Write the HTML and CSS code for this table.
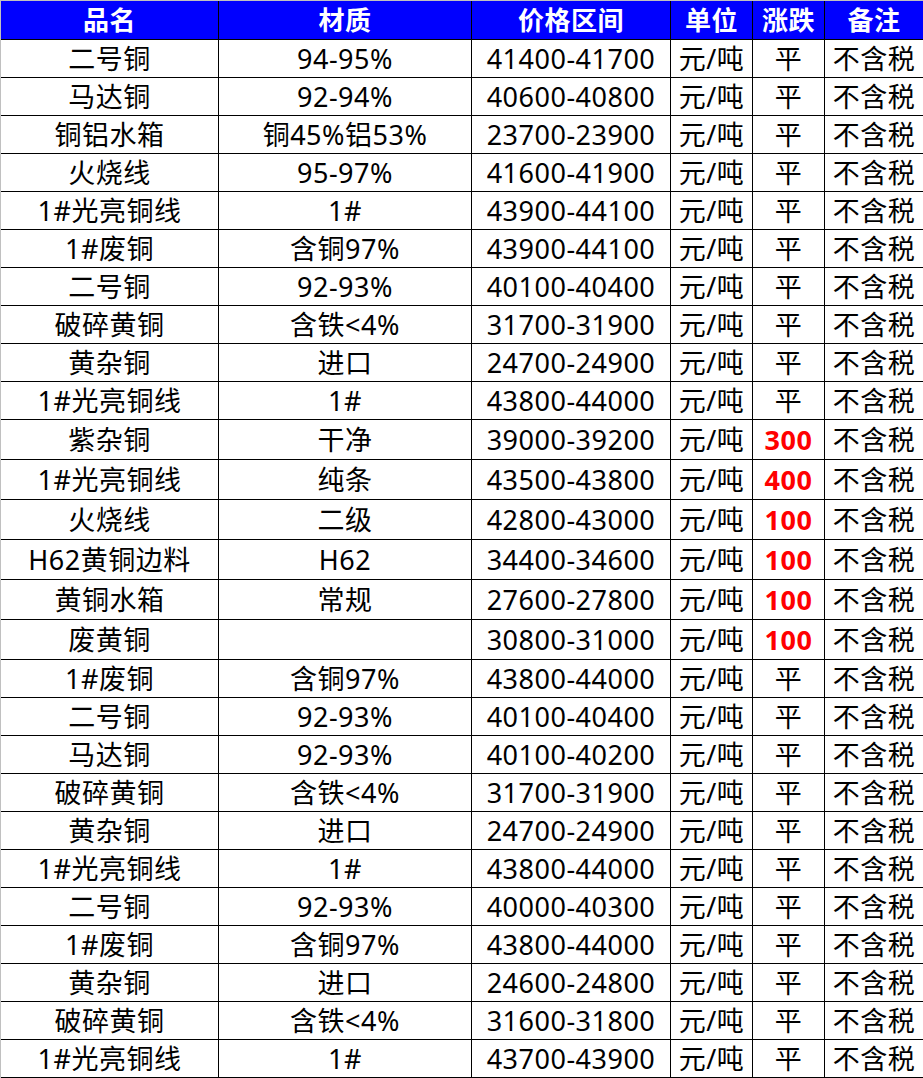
FILE: index.html
```html
<!DOCTYPE html>
<html lang="zh-CN">
<head>
<meta charset="utf-8">
<title>废铜价格表</title>
<link rel="stylesheet" href="styles.css">
</head>
<body>
<div class="sheet">
  <div class="row head"><div>品名</div><div>材质</div><div>价格区间</div><div>单位</div><div>涨跌</div><div>备注</div></div>
  <div class="row"><div>二号铜</div><div>94-95%</div><div>41400-41700</div><div>元/吨</div><div>平</div><div>不含税</div></div>
  <div class="row"><div>马达铜</div><div>92-94%</div><div>40600-40800</div><div>元/吨</div><div>平</div><div>不含税</div></div>
  <div class="row"><div>铜铝水箱</div><div>铜45%铝53%</div><div>23700-23900</div><div>元/吨</div><div>平</div><div>不含税</div></div>
  <div class="row"><div>火烧线</div><div>95-97%</div><div>41600-41900</div><div>元/吨</div><div>平</div><div>不含税</div></div>
  <div class="row"><div>1#光亮铜线</div><div>1#</div><div>43900-44100</div><div>元/吨</div><div>平</div><div>不含税</div></div>
  <div class="row"><div>1#废铜</div><div>含铜97%</div><div>43900-44100</div><div>元/吨</div><div>平</div><div>不含税</div></div>
  <div class="row"><div>二号铜</div><div>92-93%</div><div>40100-40400</div><div>元/吨</div><div>平</div><div>不含税</div></div>
  <div class="row"><div>破碎黄铜</div><div>含铁&lt;4%</div><div>31700-31900</div><div>元/吨</div><div>平</div><div>不含税</div></div>
  <div class="row"><div>黄杂铜</div><div>进口</div><div>24700-24900</div><div>元/吨</div><div>平</div><div>不含税</div></div>
  <div class="row"><div>1#光亮铜线</div><div>1#</div><div>43800-44000</div><div>元/吨</div><div>平</div><div>不含税</div></div>
  <div class="row tall"><div>紫杂铜</div><div>干净</div><div>39000-39200</div><div>元/吨</div><div class="up">300</div><div>不含税</div></div>
  <div class="row tall"><div>1#光亮铜线</div><div>纯条</div><div>43500-43800</div><div>元/吨</div><div class="up">400</div><div>不含税</div></div>
  <div class="row tall"><div>火烧线</div><div>二级</div><div>42800-43000</div><div>元/吨</div><div class="up">100</div><div>不含税</div></div>
  <div class="row tall"><div>H62黄铜边料</div><div>H62</div><div>34400-34600</div><div>元/吨</div><div class="up">100</div><div>不含税</div></div>
  <div class="row tall"><div>黄铜水箱</div><div>常规</div><div>27600-27800</div><div>元/吨</div><div class="up">100</div><div>不含税</div></div>
  <div class="row tall"><div>废黄铜</div><div></div><div>30800-31000</div><div>元/吨</div><div class="up">100</div><div>不含税</div></div>
  <div class="row"><div>1#废铜</div><div>含铜97%</div><div>43800-44000</div><div>元/吨</div><div>平</div><div>不含税</div></div>
  <div class="row"><div>二号铜</div><div>92-93%</div><div>40100-40400</div><div>元/吨</div><div>平</div><div>不含税</div></div>
  <div class="row"><div>马达铜</div><div>92-93%</div><div>40100-40200</div><div>元/吨</div><div>平</div><div>不含税</div></div>
  <div class="row"><div>破碎黄铜</div><div>含铁&lt;4%</div><div>31700-31900</div><div>元/吨</div><div>平</div><div>不含税</div></div>
  <div class="row"><div>黄杂铜</div><div>进口</div><div>24700-24900</div><div>元/吨</div><div>平</div><div>不含税</div></div>
  <div class="row"><div>1#光亮铜线</div><div>1#</div><div>43800-44000</div><div>元/吨</div><div>平</div><div>不含税</div></div>
  <div class="row"><div>二号铜</div><div>92-93%</div><div>40000-40300</div><div>元/吨</div><div>平</div><div>不含税</div></div>
  <div class="row"><div>1#废铜</div><div>含铜97%</div><div>43800-44000</div><div>元/吨</div><div>平</div><div>不含税</div></div>
  <div class="row"><div>黄杂铜</div><div>进口</div><div>24600-24800</div><div>元/吨</div><div>平</div><div>不含税</div></div>
  <div class="row"><div>破碎黄铜</div><div>含铁&lt;4%</div><div>31600-31800</div><div>元/吨</div><div>平</div><div>不含税</div></div>
  <div class="row"><div>1#光亮铜线</div><div>1#</div><div>43700-43900</div><div>元/吨</div><div>平</div><div>不含税</div></div>
</div>
</body>
</html>
```
FILE: styles.css
```css
html, body {
  margin: 0;
  padding: 0;
  background: #ffffff;
}

.sheet {
  width: 922px;
  border-top: 1px solid #c0c0c0;
  border-left: 1px solid #c0c0c0;
  background: #000000;
  padding-bottom: 1px;
  display: flex;
  flex-direction: column;
  gap: 1px;
  font-family: "Noto Sans", "Noto Sans CJK SC", sans-serif;
  font-size: 27px;
  letter-spacing: 0.5px;
  color: #000000;
}

.row {
  display: grid;
  grid-template-columns: 217px 252px 198px 81px 71px 98px;
  column-gap: 1px;
  height: 37px;
}

.row.tall {
  height: 39px;
}

.row > div {
  background: #ffffff;
  display: flex;
  align-items: center;
  justify-content: center;
  white-space: nowrap;
  overflow: hidden;
  line-height: 1;
}

.row.head {
  height: 38px;
}

.row.head > div {
  background: #0000ff;
  color: #ffffff;
  font-weight: bold;
  font-size: 26px;
}

.row > div.up {
  color: #ff0000;
  font-weight: bold;
}
```
